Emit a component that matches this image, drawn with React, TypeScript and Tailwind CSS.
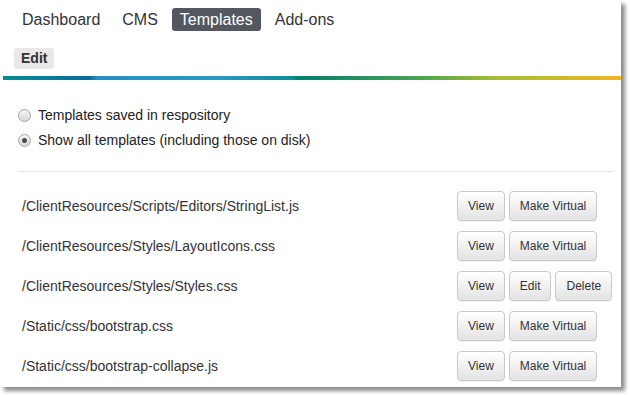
import React from "react";

const font = { fontFamily: '"Liberation Sans", Arial, sans-serif' };

function Btn({ label }: { label: string }) {
  return (
    <button className="h-[30px] px-[10px] rounded-[4px] border border-[#c9c9c9] bg-gradient-to-b from-[#ffffff] to-[#e3e3e3] text-[12px] text-[#333] leading-none shadow-[0_1px_1px_rgba(0,0,0,0.06)]">
      {label}
    </button>
  );
}

function Radio({ checked, label }: { checked?: boolean; label: string }) {
  return (
    <div className="flex items-center h-[20px]">
      <span className="w-[13px] h-[13px] rounded-full border border-[#a5a5a5] bg-gradient-to-b from-[#f4f4f4] to-[#d9d9d9] flex items-center justify-center">
        {checked && <span className="w-[5px] h-[5px] rounded-full bg-[#4d4d4d]" />}
      </span>
      <span className="ml-[7px] text-[14px] text-[#222]">{label}</span>
    </div>
  );
}

const rows: { path: string; buttons: string[] }[] = [
  { path: "/ClientResources/Scripts/Editors/StringList.js", buttons: ["View", "Make Virtual"] },
  { path: "/ClientResources/Styles/LayoutIcons.css", buttons: ["View", "Make Virtual"] },
  { path: "/ClientResources/Styles/Styles.css", buttons: ["View", "Edit", "Delete"] },
  { path: "/Static/css/bootstrap.css", buttons: ["View", "Make Virtual"] },
  { path: "/Static/css/bootstrap-collapse.js", buttons: ["View", "Make Virtual"] },
];

export default function App() {
  return (
    <div className="w-[630px] h-[395px] bg-white" style={font}>
      <div className="w-[621px] h-[387px] bg-white shadow-[4px_4px_4px_rgba(0,0,0,0.45)] flex flex-col">
        <nav className="flex gap-[6px] pl-[14px] pt-[8px] text-[16px] leading-[23px] text-[#333]">
          <span className="px-[8px]">Dashboard</span>
          <span className="px-[8px]">CMS</span>
          <span className="px-[8px] rounded-[3px] bg-[#535760] text-white">Templates</span>
          <span className="px-[8px]">Add-ons</span>
        </nav>
        <div className="mt-[17px] ml-[14px] self-start h-[21px] px-[7px] rounded-[3px] bg-[#e8e8e8] text-[14px] font-bold leading-[21px] text-[#333]">
          Edit
        </div>
        <div className="mt-[7px] ml-[3px] h-[4px] bg-[linear-gradient(to_right,#009190_0%,#0b6c9d_14%,#2690c6_15.3%,#2a98c4_35%,#0b8e96_47%,#007f70_47.8%,#1d8c62_55%,#4ca64e_68%,#a9bd34_80%,#efb51f_100%)]" />
        <div className="mt-[25px] pl-[18px] flex flex-col gap-[5px]">
          <Radio label="Templates saved in respository" />
          <Radio checked label="Show all templates (including those on disk)" />
        </div>
        <div className="mt-[21px] ml-[18px] mr-[8px] h-px bg-[#e6e6e6]" />
        <div className="mt-[14px] flex flex-col">
          {rows.map((r) => (
            <div key={r.path} className="h-[40px] flex items-center">
              <span className="w-[435px] ml-[22px] text-[14px] text-[#333]">{r.path}</span>
              <div className="flex gap-[4px]">
                {r.buttons.map((b) => (
                  <Btn key={b} label={b} />
                ))}
              </div>
            </div>
          ))}
        </div>
      </div>
    </div>
  );
}
